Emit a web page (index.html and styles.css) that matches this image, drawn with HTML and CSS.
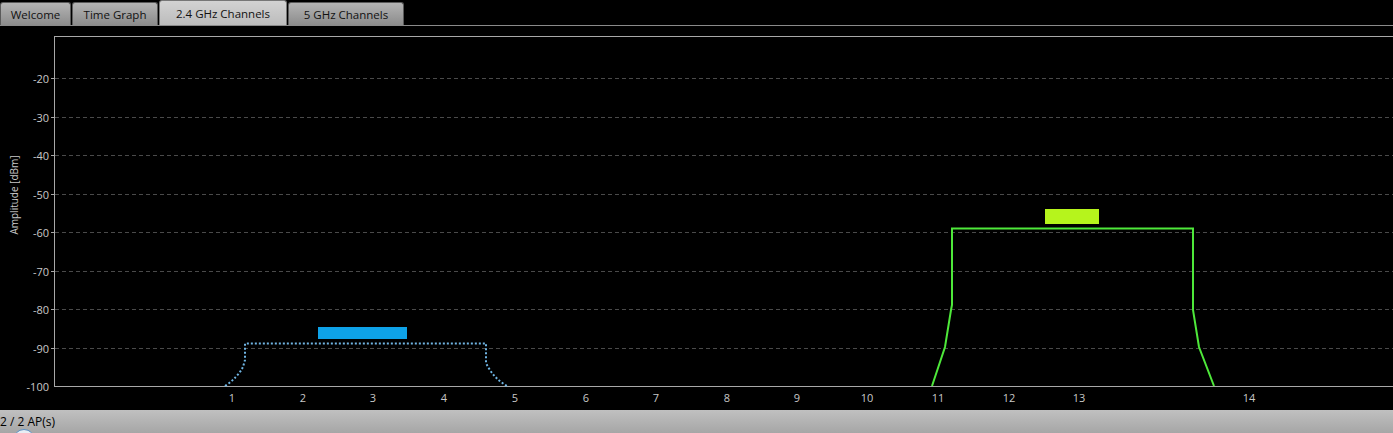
FILE: index.html
```html
<!DOCTYPE html>
<html lang="en">
<head>
<meta charset="utf-8">
<title>2.4 GHz Channels</title>
<link rel="stylesheet" href="styles.css">
</head>
<body>
<div class="app">
  <nav class="tabstrip">
    <div class="tab tab-welcome">Welcome</div>
    <div class="tab tab-time">Time Graph</div>
    <div class="tab tab-24 active">2.4 GHz Channels</div>
    <div class="tab tab-5">5 GHz Channels</div>
  </nav>
  <main class="chart">
    <svg class="plot" width="1393" height="384" viewBox="0 26 1393 384" xmlns="http://www.w3.org/2000/svg">
      <!-- horizontal grid lines, one per 10 dBm -->
      <g class="grid">
        <line x1="55" y1="78.5" x2="1393" y2="78.5"/>
        <line x1="55" y1="117.5" x2="1393" y2="117.5"/>
        <line x1="55" y1="155.5" x2="1393" y2="155.5"/>
        <line x1="55" y1="194.5" x2="1393" y2="194.5"/>
        <line x1="55" y1="232.5" x2="1393" y2="232.5"/>
        <line x1="55" y1="271.5" x2="1393" y2="271.5"/>
        <line x1="55" y1="309.5" x2="1393" y2="309.5"/>
        <line x1="55" y1="348.5" x2="1393" y2="348.5"/>
      </g>
      <!-- frame -->
      <g class="axis">
        <line x1="54.5" y1="36" x2="54.5" y2="386.5"/>
        <line x1="54" y1="36.5" x2="1393" y2="36.5"/>
        <line x1="54" y1="386.5" x2="1393" y2="386.5"/>
        <line x1="51" y1="78.5" x2="54" y2="78.5"/>
        <line x1="51" y1="117.5" x2="54" y2="117.5"/>
        <line x1="51" y1="155.5" x2="54" y2="155.5"/>
        <line x1="51" y1="194.5" x2="54" y2="194.5"/>
        <line x1="51" y1="232.5" x2="54" y2="232.5"/>
        <line x1="51" y1="271.5" x2="54" y2="271.5"/>
        <line x1="51" y1="309.5" x2="54" y2="309.5"/>
        <line x1="51" y1="348.5" x2="54" y2="348.5"/>
      </g>
      <g class="ylabels">
        <text x="49" y="82.5">-20</text>
        <text x="49" y="121.5">-30</text>
        <text x="49" y="159.5">-40</text>
        <text x="49" y="198.5">-50</text>
        <text x="49" y="236.5">-60</text>
        <text x="49" y="275.5">-70</text>
        <text x="49" y="313.5">-80</text>
        <text x="49" y="352.5">-90</text>
        <text x="49" y="390.5">-100</text>
      </g>
      <text class="ytitle" transform="translate(18,195) rotate(-90)">Amplitude [dBm]</text>
      <g class="xlabels">
        <text x="232" y="402">1</text>
        <text x="303" y="402">2</text>
        <text x="373" y="402">3</text>
        <text x="444" y="402">4</text>
        <text x="515" y="402">5</text>
        <text x="586" y="402">6</text>
        <text x="656" y="402">7</text>
        <text x="727" y="402">8</text>
        <text x="797" y="402">9</text>
        <text x="867" y="402">10</text>
        <text x="938" y="402">11</text>
        <text x="1009" y="402">12</text>
        <text x="1079" y="402">13</text>
        <text x="1249" y="402">14</text>
      </g>
      <!-- AP on channel 3 -->
      <path class="ap-blue" d="M225,386 Q238,377 243,367 L245,360 L245,343.5 L486,343.5 L486,363 Q493,378 507,386"/>
      <rect class="tag-blue" x="318" y="327" width="89" height="12"/>
      <!-- AP on channel 13 -->
      <path class="ap-green" d="M932,386 L945,347 L951,310 L952,305 L952,228.5 L1193,228.5 L1193,310 L1199,347 L1214,386"/>
      <rect class="tag-green" x="1045" y="209" width="54" height="15"/>
    </svg>
  </main>
  <footer class="statusbar">
    <span class="status-text">2 / 2 AP(s)</span>
    <span class="status-orb"></span>
  </footer>
</div>
</body>
</html>
```

FILE: styles.css
```css
html, body {
  margin: 0;
  padding: 0;
  background: #000;
  overflow: hidden;
}

.app {
  width: 1393px;
  height: 433px;
  display: flex;
  flex-direction: column;
  font-family: "Open Sans", "Liberation Sans", sans-serif;
}

.tabstrip {
  height: 25px;
  display: flex;
  align-items: flex-end;
  border-bottom: 1px solid #8a8a8a;
  background: #000;
}

.tab {
  box-sizing: border-box;
  height: 23px;
  display: flex;
  align-items: center;
  justify-content: center;
  font-size: 11.5px;
  color: #111;
  background: linear-gradient(#b4b4b4, #8c8c8c);
  border: 1px solid #5a5a5a;
  border-bottom: none;
  border-radius: 3px 3px 0 0;
  margin-right: 1px;
}

.tab.active {
  height: 25px;
  background: linear-gradient(#d2d2d2, #bcbcbc);
  border-color: #777;
}

.tab-welcome { width: 71px; }
.tab-time { width: 86px; }
.tab-24 { width: 128px; }
.tab-5 { width: 116px; }

.chart {
  height: 384px;
  background: #000;
}

.plot {
  display: block;
}

.grid line {
  stroke: #4a4a4a;
  stroke-width: 1;
  stroke-dasharray: 4 3;
}

.axis line {
  stroke: #a8a8a8;
  stroke-width: 1;
}

.ylabels text {
  fill: #c8c8c8;
  font-family: "Open Sans", "Liberation Sans", sans-serif;
  font-size: 11px;
  text-anchor: end;
}

.xlabels text {
  fill: #c8c8c8;
  font-family: "Open Sans", "Liberation Sans", sans-serif;
  font-size: 11px;
  text-anchor: middle;
}

.ytitle {
  fill: #c8c8c8;
  font-family: "Open Sans", "Liberation Sans", sans-serif;
  font-size: 10px;
  text-anchor: middle;
}

.ap-blue {
  fill: none;
  stroke: #6fb4e2;
  stroke-width: 2;
  stroke-dasharray: 2 2;
}

.tag-blue {
  fill: #0ea2e8;
}

.ap-green {
  fill: none;
  stroke: #4ee83a;
  stroke-width: 2;
}

.tag-green {
  fill: #b6f41c;
}

.statusbar {
  flex: 1;
  position: relative;
  display: flex;
  align-items: flex-start;
  background: linear-gradient(#c0c0c0, #a6a6a6);
  overflow: hidden;
}

.status-text {
  margin-top: 4px;
  font-size: 12px;
  color: #000;
  line-height: 16px;
}

.status-orb {
  position: absolute;
  left: 13px;
  top: 19px;
  width: 20px;
  height: 20px;
  border-radius: 50%;
  background: #e8eef4;
  border: 1px solid #5b8fc4;
}
```
